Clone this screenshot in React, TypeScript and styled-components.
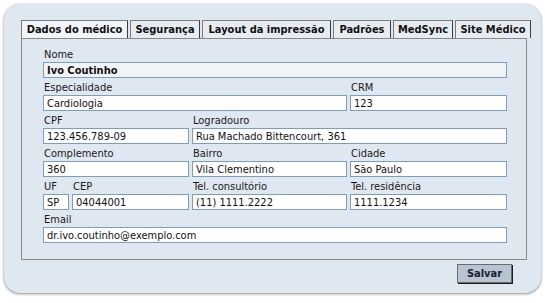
import React from "react";
import styled, { createGlobalStyle } from "styled-components";

const GlobalStyle = createGlobalStyle`
  html, body { margin: 0; padding: 0; background: #ffffff; }
  body {
    font-family: "DejaVu Sans", "Liberation Sans", sans-serif;
    font-stretch: condensed;
    font-size: 11px;
    color: #111;
  }
  * { box-sizing: border-box; }
`;

const Panel = styled.div`
  margin: 4px;
  width: 537px;
  height: 289px;
  border-radius: 16px;
  background: #dfe7f0;
  box-shadow: 0 1px 3px rgba(0, 0, 0, 0.45), 0 0 1px rgba(0, 0, 0, 0.15);
  padding: 16px 0 0 17px;
  display: flex;
  flex-direction: column;
`;

const TabBar = styled.div`
  display: flex;
  gap: 2px;
  height: 18px;
`;

const Tab = styled.div<{ $w: number; $active?: boolean }>`
  width: ${(p) => p.$w}px;
  height: 18px;
  border: 1px solid #7c7c7c;
  border-right-color: #3c3c3c;
  border-bottom: none;
  background: ${(p) => (p.$active ? "#f1f4f8" : "#e7ecf2")};
  font-weight: bold;
  font-size: 11px;
  line-height: 17px;
  text-align: center;
  white-space: nowrap;
  color: #111;
`;

const Content = styled.div`
  width: 506px;
  height: 222px;
  border: 1px solid #888888;
  padding: 7px 0 0 21px;
`;

const FormGrid = styled.div`
  display: grid;
  grid-template-columns: 146px 155px 157px;
  column-gap: 3px;
  row-gap: 1px;
`;

const Field = styled.div<{ $span?: number }>`
  grid-column: span ${(p) => p.$span ?? 1};
  display: flex;
  flex-direction: column;
  min-width: 0;
`;

const SubGrid = styled.div`
  display: grid;
  grid-template-columns: 26px 117px;
  column-gap: 3px;
`;

const Label = styled.div`
  height: 16px;
  padding-top: 1px;
  line-height: 15px;
  padding-left: 1px;
  font-size: 11px;
  color: #1a1a1a;
  white-space: nowrap;
`;

const Input = styled.input<{ $strong?: boolean }>`
  width: 100%;
  height: 16px;
  border: 1px solid #7b9ebd;
  background: ${(p) => (p.$strong ? "#f1f3f5" : "#ffffff")};
  font-family: inherit;
  font-stretch: condensed;
  font-size: 11px;
  font-weight: ${(p) => (p.$strong ? "bold" : "normal")};
  color: #111;
  padding: 0 3px;
  margin: 0;
  outline: none;
`;

const Footer = styled.div`
  width: 506px;
  display: flex;
  justify-content: flex-end;
  padding: 4px 15px 0 0;
`;

const Button = styled.button`
  width: 55px;
  height: 19px;
  border: 1px solid #6a6a6a;
  box-shadow: 1px 1px 0 #1c1c1c;
  background: #b7c4d2;
  font-family: inherit;
  font-stretch: condensed;
  font-weight: bold;
  font-size: 11px;
  color: #1a2030;
  padding: 0;
  line-height: 16px;
`;

const tabs = [
  { label: "Dados do médico", w: 107, active: true },
  { label: "Segurança", w: 70 },
  { label: "Layout da impressão", w: 129 },
  { label: "Padrões", w: 58 },
  { label: "MedSync", w: 60 },
  { label: "Site Médico", w: 76 },
];

const F = ({ label, value, span, strong }: { label: string; value: string; span?: number; strong?: boolean }) => (
  <Field $span={span}>
    <Label>{label}</Label>
    <Input readOnly value={value} $strong={strong} />
  </Field>
);

export default function App() {
  return (
    <>
      <GlobalStyle />
      <Panel>
        <TabBar>
          {tabs.map((t) => (
            <Tab key={t.label} $w={t.w} $active={t.active}>
              {t.label}
            </Tab>
          ))}
        </TabBar>
        <Content>
          <FormGrid>
            <F label="Nome" value="Ivo Coutinho" span={3} strong />
            <F label="Especialidade" value="Cardiologia" span={2} />
            <F label="CRM" value="123" />
            <F label="CPF" value="123.456.789-09" />
            <F label="Logradouro" value="Rua Machado Bittencourt, 361" span={2} />
            <F label="Complemento" value="360" />
            <F label="Bairro" value="Vila Clementino" />
            <F label="Cidade" value="São Paulo" />
            <SubGrid>
              <F label="UF" value="SP" />
              <F label="CEP" value="04044001" />
            </SubGrid>
            <F label="Tel. consultório" value="(11) 1111.2222" />
            <F label="Tel. residência" value="1111.1234" />
            <F label="Email" value="dr.ivo.coutinho@exemplo.com" span={3} />
          </FormGrid>
        </Content>
        <Footer>
          <Button>Salvar</Button>
        </Footer>
      </Panel>
    </>
  );
}
